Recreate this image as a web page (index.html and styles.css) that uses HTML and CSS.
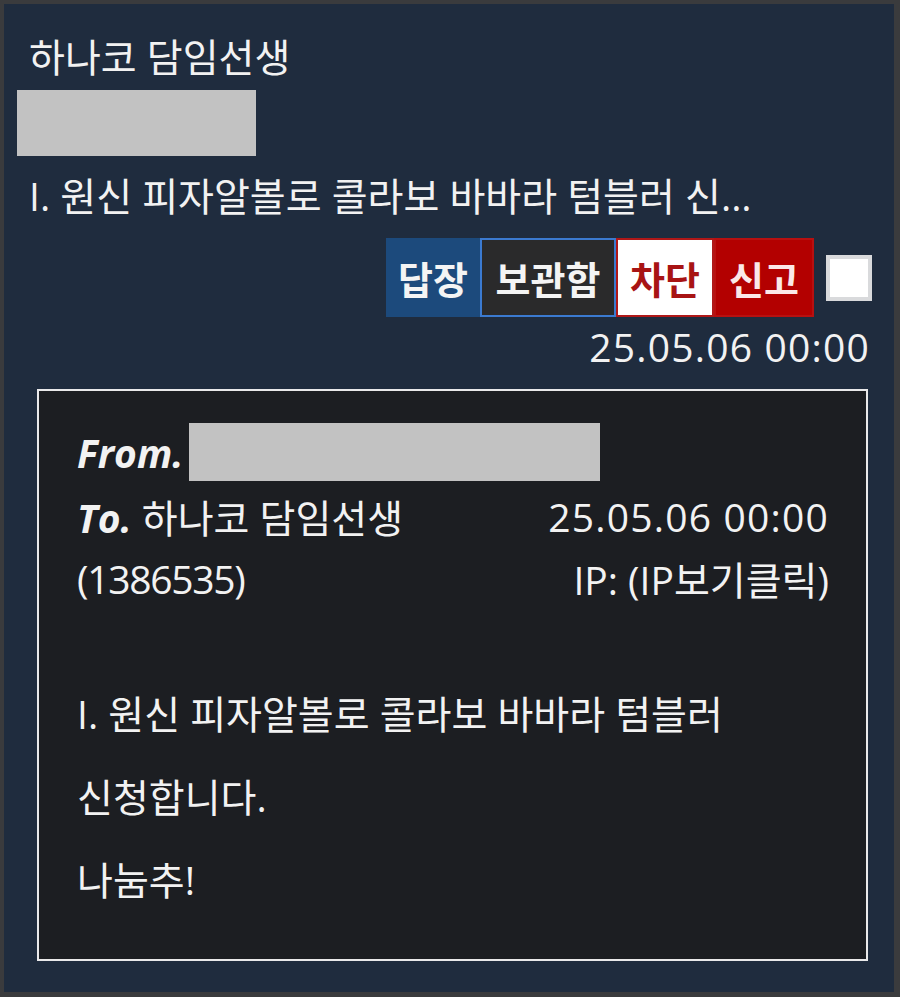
FILE: index.html
```html
<!DOCTYPE html>
<html lang="ko">
<head>
<meta charset="utf-8">
<link rel="stylesheet" href="styles.css">
</head>
<body>
<div class="frame">
  <div class="panel">
    <div class="title">하나코 담임선생</div>
    <div class="redact-top"></div>
    <div class="subject">I. 원신 피자알볼로 콜라보 바바라 텀블러 신...</div>
    <div class="actions">
      <span class="btn btn-reply">답장</span>
      <span class="btn btn-keep">보관함</span>
      <span class="btn btn-block">차단</span>
      <span class="btn btn-report">신고</span>
      <span class="check"></span>
    </div>
    <div class="date stamp">25.05.06 00:00</div>
    <div class="message">
      <div class="meta-row">
        <span class="label">From.</span>
        <span class="redact-from"></span>
      </div>
      <div class="meta-row split">
        <span><span class="label">To.</span> 하나코 담임선생</span>
        <span class="stamp">25.05.06 00:00</span>
      </div>
      <div class="meta-row split">
        <span class="uid">(1386535)</span>
        <span>IP: (IP보기클릭)</span>
      </div>
      <div class="body">
        <p class="line">I. 원신 피자알볼로 콜라보 바바라 텀블러</p>
        <p class="line">신청합니다.</p>
        <p class="line">나눔추!</p>
      </div>
    </div>
  </div>
</div>
</body>
</html>
```

FILE: styles.css
```css
html, body {
  margin: 0;
  padding: 0;
  background: #3a3b3d;
}
body {
  width: 900px;
  height: 997px;
  font-family: "Open Sans", "Noto Sans CJK KR", sans-serif;
  color: #f2f2f2;
}
.frame {
  box-sizing: border-box;
  width: 900px;
  height: 997px;
  padding: 4px 6px 5px 4px;
  background: #3a3b3d;
}
.panel {
  box-sizing: border-box;
  height: 100%;
  background: #1f2c3e;
  padding: 29px 22px 0 13px;
  display: flex;
  flex-direction: column;
}
.title {
  font-size: 39px;
  line-height: 48px;
  padding-left: 12px;
}
.redact-top {
  width: 239px;
  height: 66px;
  background: #c2c2c2;
  margin-top: 9px;
}
.subject {
  margin-top: 16px;
  font-size: 39px;
  line-height: 48px;
  padding-left: 12px;
  white-space: nowrap;
}
.actions {
  margin-top: 18px;
  display: flex;
  justify-content: flex-end;
  align-items: center;
  height: 79px;
}
.btn {
  box-sizing: border-box;
  height: 79px;
  display: flex;
  align-items: center;
  justify-content: center;
  font-size: 38px;
  font-weight: 700;
}
.btn-reply {
  width: 94px;
  background: #1c4a7c;
  color: #f4f4f4;
}
.btn-keep {
  width: 136px;
  background: #2a2a2b;
  border: 2px solid #3b7ad0;
  color: #f4f4f4;
}
.btn-block {
  width: 98px;
  background: #ffffff;
  border: 2px solid #b01818;
  color: #a81414;
}
.btn-report {
  width: 100px;
  background: #b30000;
  border: 2px solid #b81010;
  color: #fbe8e8;
}
.check {
  box-sizing: border-box;
  width: 46px;
  height: 46px;
  margin-left: 12px;
  background: #ffffff;
  border: 4px solid #d9dadc;
}
.date {
  margin-top: 6px;
  text-align: right;
  font-size: 39px;
  line-height: 48px;
  padding-right: 2px;
}
.stamp {
  letter-spacing: 1.2px;
}
.uid {
  letter-spacing: -1.3px;
}
.message {
  box-sizing: border-box;
  margin: 18px 4px 0 20px;
  height: 572px;
  border: 2px solid #e9e9ea;
  background: #1c1e22;
  padding: 28px 37px 0 38px;
}
.meta-row {
  display: flex;
  align-items: center;
  height: 62px;
  font-size: 39px;
}
.meta-row:first-child {
  height: 66px;
}
.split {
  justify-content: space-between;
}
.label {
  font-weight: 700;
  font-style: italic;
}
.redact-from {
  width: 411px;
  height: 58px;
  background: #c2c2c2;
  margin-left: 6px;
}
.body {
  margin-top: 81px;
}
.line {
  margin: 0 0 35px 0;
  font-size: 39px;
  line-height: 48px;
}
```
